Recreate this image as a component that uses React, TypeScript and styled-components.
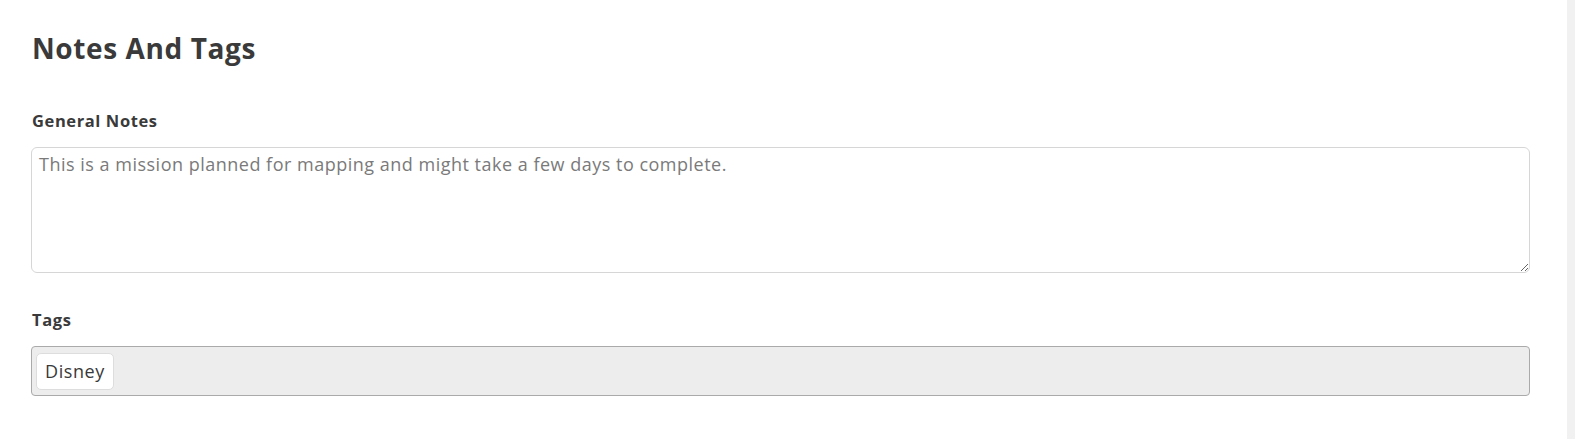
import React from "react";
import styled, { createGlobalStyle } from "styled-components";

const GlobalStyle = createGlobalStyle`
    html, body {
        margin: 0;
        padding: 0;
        background: #ffffff;
        font-family: "Open Sans", "Noto Sans", sans-serif;
        color: #3a3a3a;
    }
`;

const tags = ["Disney"];

export default function App() {
    return (
        <>
            <GlobalStyle />
            <Page>
                <Content>
                    <Title>Notes And Tags</Title>
                    <Field>
                        <Label>General Notes</Label>
                        <Notes defaultValue="This is a mission planned for mapping and might take a few days to complete." />
                    </Field>
                    <Field>
                        <Label>Tags</Label>
                        <TagBox>
                            {tags.map((tag) => (
                                <Tag key={tag}>{tag}</Tag>
                            ))}
                        </TagBox>
                    </Field>
                </Content>
                <Gutter />
            </Page>
        </>
    );
}

const Page = styled.div`
    display: flex;
    height: 439px;
`;

const Content = styled.div`
    flex: 1;
    padding: 28px 37px 0 31px;
`;

const Gutter = styled.div`
    width: 8px;
    background: #f1f1f1;
`;

const Title = styled.h1`
    margin: 0 0 42px 1px;
    font-size: 28px;
    font-weight: 700;
    line-height: 40px;
    letter-spacing: 0.6px;
    color: #3a3a3a;
`;

const Field = styled.div`
    display: flex;
    flex-direction: column;
    margin-bottom: 36px;
`;

const Label = styled.div`
    margin: 0 0 15px 1px;
    font-size: 16.5px;
    font-weight: 700;
    line-height: 22px;
    letter-spacing: 0.6px;
    color: #3a3a3a;
`;

const Notes = styled.textarea`
    box-sizing: border-box;
    height: 126px;
    padding: 4px 7px;
    border: 1px solid #d6d6d6;
    border-radius: 6px;
    font-family: "Open Sans", "Noto Sans", sans-serif;
    font-size: 18px;
    line-height: 24px;
    letter-spacing: 0.5px;
    color: #7a7a7a;
    outline: none;
    resize: vertical;
`;

const TagBox = styled.div`
    box-sizing: border-box;
    display: flex;
    align-items: center;
    gap: 6px;
    height: 50px;
    padding: 0 4px;
    background: #ededed;
    border: 1px solid #aaaaaa;
    border-radius: 4px;
`;

const Tag = styled.span`
    box-sizing: border-box;
    display: flex;
    align-items: center;
    height: 37px;
    padding: 0 8px;
    background: #ffffff;
    border: 1px solid #dddddd;
    border-radius: 5px;
    font-size: 18px;
    letter-spacing: 0.6px;
    color: #3a3a3a;
`;
